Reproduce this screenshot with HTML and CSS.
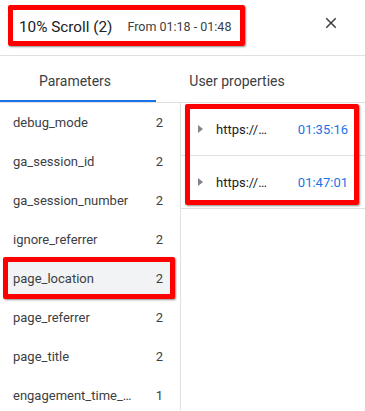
FILE: index.html
```html
<!DOCTYPE html>
<html>
<head>
<meta charset="utf-8">
<link rel="stylesheet" href="styles.css">
</head>
<body>
<div class="panel">
  <header class="header">
    <div class="title-box">
      <span class="title">10% Scroll (2)</span>
      <span class="range">From 01:18 - 01:48</span>
    </div>
    <button class="close" aria-label="Close">
      <svg viewBox="0 0 24 24" width="18" height="18"><path d="M19 6.41L17.59 5 12 10.59 6.41 5 5 6.41 10.59 12 5 17.59 6.41 19 12 13.41 17.59 19 19 17.59 13.41 12z" fill="#3c4043"/></svg>
    </button>
  </header>
  <nav class="tabs">
    <div class="tab tab-params active">Parameters</div>
    <div class="tab tab-user">User properties</div>
  </nav>
  <div class="content">
    <ul class="params">
      <li class="param"><span>debug_mode</span><span>2</span></li>
      <li class="param"><span>ga_session_id</span><span>2</span></li>
      <li class="param"><span>ga_session_number</span><span>2</span></li>
      <li class="param"><span>ignore_referrer</span><span>2</span></li>
      <li class="param selected"><span>page_location</span><span>2</span></li>
      <li class="param"><span>page_referrer</span><span>2</span></li>
      <li class="param"><span>page_title</span><span>2</span></li>
      <li class="param"><span>engagement_time_…</span><span>1</span></li>
    </ul>
    <div class="values">
      <div class="value-row">
        <span class="caret"></span>
        <span class="url">https://…</span>
        <span class="time">01:35:16</span>
      </div>
      <div class="value-row">
        <span class="caret"></span>
        <span class="url">https://…</span>
        <span class="time">01:47:01</span>
      </div>
      <div class="annot values-annot"></div>
    </div>
  </div>
</div>
</body>
</html>
```

FILE: styles.css
```css
html, body {
  margin: 0;
  padding: 0;
  background: #fff;
}
body {
  font-family: Roboto, "Liberation Sans", Arial, sans-serif;
  color: #3c4043;
  width: 365px;
  height: 411px;
  overflow: hidden;
}
.panel {
  display: flex;
  flex-direction: column;
}
.header {
  height: 56px;
  box-sizing: border-box;
  border-bottom: 1px solid #e0e0e0;
  display: flex;
  align-items: flex-start;
  justify-content: space-between;
  padding: 5px 22px 0 8px;
}
.title-box {
  box-sizing: border-box;
  height: 41px;
  width: 237px;
  border: 5px solid #ff0000;
  border-radius: 2px;
  box-shadow: 1px 1px 2px rgba(0,0,0,0.45);
  display: flex;
  align-items: center;
  padding: 2px 6px 0 6px;
  gap: 15px;
}
.title {
  font-size: 15.3px;
  color: #202124;
  white-space: nowrap;
}
.range {
  font-size: 12.5px;
  color: #3c4043;
  white-space: nowrap;
}
.close {
  margin-top: 6px;
  width: 24px;
  height: 24px;
  padding: 0;
  border: 0;
  background: transparent;
  display: flex;
  align-items: center;
  justify-content: center;
}
.tabs {
  display: flex;
  height: 47px;
  box-sizing: border-box;
  border-bottom: 1px solid #e0e0e0;
}
.tab {
  font-size: 14px;
  color: #3c4043;
  display: flex;
  align-items: center;
  justify-content: center;
  box-sizing: border-box;
  padding-top: 6px;
}
.tab-params {
  width: 156px;
  padding-right: 6px;
  border-bottom: 2px solid #1a73e8;
  margin-bottom: -1px;
  height: 46px;
}
.tab-user {
  width: 162px;
  padding-bottom: 2px;
}
.content {
  display: flex;
  flex: 1;
}
.params {
  list-style: none;
  margin: 0;
  padding: 0;
  width: 181px;
  box-sizing: border-box;
  border-right: 1px solid #e0e0e0;
  height: 307px;
}
.param {
  height: 39px;
  box-sizing: border-box;
  display: flex;
  align-items: center;
  justify-content: space-between;
  padding: 0 17px 0 13px;
  font-size: 13px;
  color: #3c4043;
  white-space: nowrap;
}
.param.selected {
  height: 42px;
  margin: -2px 5px -1px 3px;
  border: 5px solid #ff0000;
  border-radius: 2px;
  background: #f1f3f4;
  box-shadow: 1px 1px 2px rgba(0,0,0,0.45);
  padding: 0 7px 0 5px;
}
.values {
  flex: 1;
  position: relative;
}
.value-row {
  height: 53px;
  box-sizing: border-box;
  border-bottom: 1px solid #e0e0e0;
  display: flex;
  align-items: center;
  padding: 0 17px 0 17px;
  font-size: 13px;
}
.caret {
  width: 0;
  height: 0;
  border-top: 4.5px solid transparent;
  border-bottom: 4.5px solid transparent;
  border-left: 5px solid #80868b;
  margin-right: 13px;
}
.url {
  color: #202124;
  flex: 1;
}
.time {
  color: #1a73e8;
}
.annot {
  position: absolute;
  border: 5px solid #ff0000;
  border-radius: 2px;
  box-shadow: 1px 1px 2px rgba(0,0,0,0.45);
  box-sizing: border-box;
}
.values-annot {
  left: 4px;
  top: 1px;
  width: 174px;
  height: 101px;
}
```
